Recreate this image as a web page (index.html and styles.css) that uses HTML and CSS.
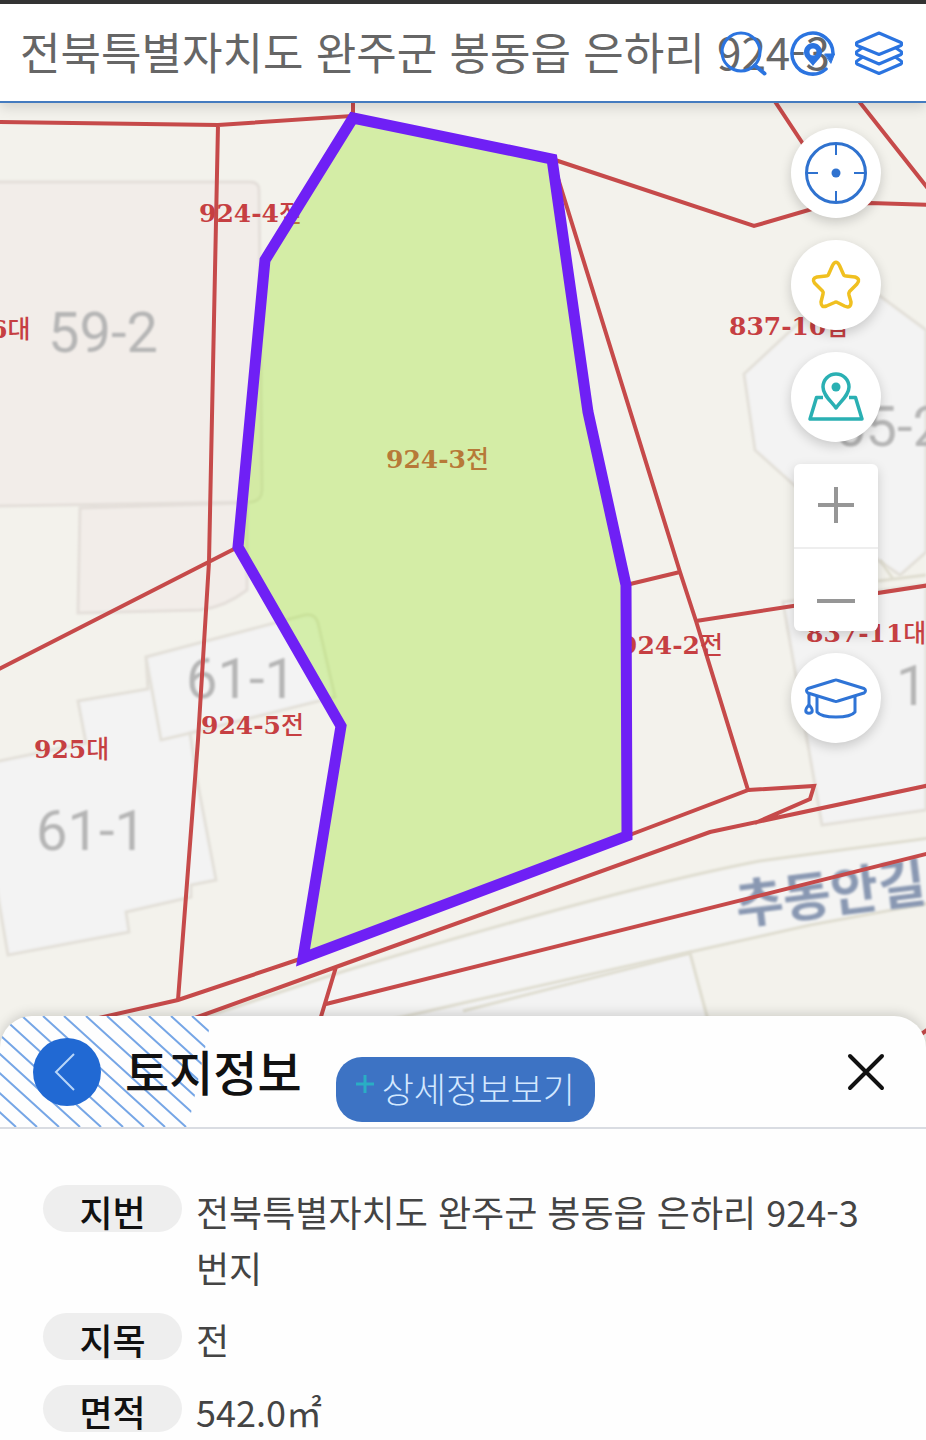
FILE: index.html
```html
<!DOCTYPE html>
<html lang="ko">
<head>
<meta charset="utf-8">
<meta name="viewport" content="width=device-width, initial-scale=1">
<title>토지정보</title>
<link rel="stylesheet" href="styles.css">
</head>
<body>
<div class="app">
  <header class="search-bar">
    <input class="search-input" type="text" aria-label="주소 검색" value="전북특별자치도 완주군 봉동읍 은하리 924-3">
    <div class="search-actions">
      <button class="icon-button" type="button" aria-label="검색">
        <svg viewBox="0 0 48 48" fill="none" stroke="#2b74e0" stroke-width="3" stroke-linecap="round"><circle cx="22" cy="23" r="19"/><path d="M36 36.500l9.500 8" stroke-width="4"/></svg>
      </button>
      <button class="icon-button" type="button" aria-label="위치 초기화">
        <svg viewBox="0 0 48 48" fill="none" stroke="#2b74e0" stroke-width="3.500" stroke-linecap="round"><path d="M39 40A20.500 20.500 0 1 1 46 25"/><path d="M38 25h9.500L44 34z" fill="#2b74e0" stroke-width="1" stroke-linejoin="round"/><path fill="#2b74e0" fill-rule="evenodd" stroke="none" d="M26 14c-5 0-9 4-9 9 0 6 5 8 9 14 4-6 9-8 9-14 0-5-4-9-9-9zm0 5.500a3.500 3.500 0 1 1 0 7 3.500 3.500 0 0 1 0-7z"/></svg>
      </button>
      <button class="icon-button" type="button" aria-label="레이어">
        <svg viewBox="0 0 48 48" fill="none" stroke="#2b74e0" stroke-width="3" stroke-linejoin="round" stroke-linecap="round"><path d="M24 4L46 13.500Q48 15 46 16.500L24 25.500 2 16.500Q0 15 2 13.500z"/><path d="M7 19l-5 3.500Q0 24 2 25.500L24 35 46 25.500Q48 24 46 22.500L41 19"/><path d="M7 28.500L2 32Q0 33.500 2 35L24 44.500 46 35Q48 33.500 46 32l-5-3.500"/></svg>
      </button>
    </div>
  </header>

  <main class="map">
    <svg class="map-canvas" viewBox="0 103 926 945" preserveAspectRatio="xMidYMin slice" role="img" aria-label="지적도">
      <defs>
        <filter id="soft" x="-10%" y="-10%" width="120%" height="120%"><feGaussianBlur stdDeviation="1.300"/></filter>
      </defs>
      <g class="building building-warm">
        <path d="M-10 182H250Q259 182 259 190L262 490Q262 500 252 502L-10 506z"/>
        <path d="M80 508L247 503V590Q225 607 200 610L78 613z"/>
      </g>
      <g class="building">
        <path d="M-10 763L86 743 78 701 148 689 146 657 305 615Q315 613 318 623L335 697 190 733 197 780 216 880 191 885V897L126 912 129 932 8 955 -10 850z"/>
        <path class="building-line" d="M146 657L161 740 195 732"/>
        <path d="M926 330L880 296Q850 280 815 308L744 374 755 450 794 485 878 560 900 575 926 552z"/>
        <path d="M783 602L926 585V810L822 825z"/>
        <path d="M-10 1050L690 953 706 1017V1060H-10z" stroke="none"/>
      </g>
      <path class="road" d="M0 1085L335 974Q620 888 760 861L930 838V903L810 925 690 952 463 1003 150 1075z"/>
      <path class="road-line" d="M463 1011L690 953 708 1020M878 581L926 575M880 560L893 579"/>

      <g class="house-no">
        <text x="48" y="352">59-2</text>
        <text x="186" y="698">61-1</text>
        <text x="36" y="850">61-1</text>
        <text x="834" y="446">65-2</text>
        <text x="896" y="705">1</text>
      </g>
      <text class="road-name" transform="translate(738 924) rotate(-7)">추동안길</text>

      <g class="lots">
        <path d="M-5 122L218 125 353 116V100M218 125L209 562 198 740 178 1000M-5 671L238 547"/>
        <path d="M552 159L754 226 812 209 870 203 930 205M774 100L815 162M858 100L930 191"/>
        <path d="M552 159L680 572 696 621 748 790 627 836M626 585L680 572M696 621L930 585"/>
        <path d="M748 790L814 786 810 799 755 823M930 785L710 832 336 967 195 1018M303 958L178 1000 90 1020M336 967L320 1020M326 1004L930 853M920 1035L930 1028"/>
      </g>

      <g class="lot-no">
        <text x="199" y="222">924-4<tspan class="lot-kind">전</tspan></text>
        <text x="-10" y="338">6<tspan class="lot-kind">대</tspan></text>
        <text x="386" y="468">924-3<tspan class="lot-kind">전</tspan></text>
        <text x="729" y="335">837-10<tspan class="lot-kind">답</tspan></text>
        <text x="620" y="654">924-2<tspan class="lot-kind">전</tspan></text>
        <text x="806" y="642">837-11<tspan class="lot-kind">대</tspan></text>
        <text x="201" y="734">924-5<tspan class="lot-kind">전</tspan></text>
        <text x="34" y="758">925<tspan class="lot-kind">대</tspan></text>
      </g>
      <path class="selected-lot" d="M353 118L552 159 588 412 626 585 627 836 303 958 341 726 238 547 265 260z"/>
    </svg>

    <div class="map-tools">
      <button class="round-button" type="button" aria-label="현재 위치">
        <svg viewBox="0 0 64 64" fill="none" stroke="#2f72cf" stroke-width="3"><circle cx="32" cy="32" r="29.500"/><path d="M32 3v11M32 50v11M3 32h11M50 32h11" stroke-width="2"/><circle cx="32" cy="32" r="4.500" fill="#2f72cf" stroke="none"/></svg>
      </button>
      <button class="round-button" type="button" aria-label="즐겨찾기">
        <svg viewBox="0 0 64 64" fill="none" stroke="#f0c020" stroke-width="3.500" stroke-linejoin="round"><path d="M28.500 12.500Q32 6 35.500 12.500L39.500 21.500Q40 23 42 23L51 24Q57 26 53 31L45.500 38.500Q44.500 40 45 42L47 49Q47 56 40.500 53L33.500 49.500Q32 48.700 30.500 49.500L22.500 53Q17 55 17 49L19 41Q19.500 39 18.500 38L10.500 30Q7.500 25.500 13 24L22 23Q24 23 24.500 21.500z"/></svg>
      </button>
      <button class="round-button" type="button" aria-label="지도 위치">
        <svg viewBox="0 0 64 64" fill="none" stroke="#2ab0b3" stroke-width="3.500" stroke-linejoin="round"><path d="M32 43C27 36 19 30 19 22a13 13 0 0 1 26 0C45 30 37 36 32 43z"/><circle cx="32" cy="22" r="4.500" fill="#2ab0b3" stroke="none"/><path d="M19 32.500H12.500L6 54H58L51.500 32.500H45"/></svg>
      </button>
      <div class="zoom">
        <button class="zoom-button" type="button" aria-label="확대"><svg viewBox="0 0 40 40" stroke="#969696" stroke-width="4"><path d="M20 1v36M2 19h36"/></svg></button>
        <button class="zoom-button zoom-out" type="button" aria-label="축소"><svg viewBox="0 0 40 40" stroke="#969696" stroke-width="4"><path d="M1 31h38"/></svg></button>
      </div>
      <button class="round-button" type="button" aria-label="도움말">
        <svg viewBox="0 0 64 64" fill="none" stroke="#2f74d6" stroke-width="3" stroke-linejoin="round"><path d="M30 14.500Q32 13.500 34 14.500L60 22.500Q63 24.500 60 27L34 35Q32 36 30 35L4 27Q1 24.500 4 22.500z"/><path d="M13 29.500V46Q17 51 32 51T51 46V29.500M5 27V40"/><path d="M5 39Q9 43 8 46Q5 48.500 2 46Q1 43 5 39z"/></svg>
      </button>
    </div>
  </main>

  <section class="sheet" aria-labelledby="sheet-title">
    <header class="sheet-header">
      <svg class="hatch" viewBox="0 0 212 111" fill="none" stroke="#76a6e6" stroke-width="2" aria-hidden="true">
        <defs><clipPath id="hatch-edge"><path d="M0 0H212L188 111H0z"/></clipPath></defs>
        <path clip-path="url(#hatch-edge)" d="M-106 0l122 111M-85 0l122 111M-63 0l122 111M-42 0l122 111M-21 0l122 111M1 0l122 111M22 0l122 111M43 0l122 111M64 0l122 111M86 0l122 111M107 0l122 111M128 0l122 111M149 0l122 111M171 0l122 111M192 0l122 111"/>
      </svg>
      <button class="back" type="button" aria-label="뒤로"><svg viewBox="0 0 40 40" fill="none" stroke="#b9d6f8" stroke-width="2"><path d="M27 2L9 20 27 38"/></svg></button>
      <h1 class="sheet-title" id="sheet-title">토지정보</h1>
      <button class="detail" type="button"><svg viewBox="0 0 18 18" stroke="#2aaec4" stroke-width="3" aria-hidden="true"><path d="M9 0v18M0 9h18"/></svg>상세정보보기</button>
      <button class="close" type="button" aria-label="닫기"><svg viewBox="0 0 40 40" stroke="#111" stroke-width="4" stroke-linecap="round"><path d="M4 4l32 32M36 4L4 36"/></svg></button>
    </header>
    <dl class="facts">
      <dt>지번</dt><dd>전북특별자치도 완주군 봉동읍 은하리 924-3 번지</dd>
      <dt>지목</dt><dd>전</dd>
      <dt>면적</dt><dd>542.0㎡</dd>
    </dl>
  </section>
</div>
</body>
</html>
```
FILE: styles.css
```css
* { box-sizing: border-box; }

body {
  margin: 0;
  background: #fefefe;
  color: #444;
  font-family: "Noto Sans CJK KR", sans-serif;
}

button {
  margin: 0;
  padding: 0;
  border: 0;
  background: none;
  font: inherit;
  cursor: pointer;
}

svg { display: block; }

.app {
  display: flex;
  flex-direction: column;
  min-height: 100vh;
}

/* Search bar */
.search-bar {
  position: relative;
  z-index: 1;
  display: flex;
  height: 103px;
  border-top: 4px solid #333;
  border-bottom: 2px solid #447bbf;
  background: #fff;
  box-shadow: 0 4px 12px rgba(0, 0, 0, 0.14);
}

.search-input {
  flex: 1;
  min-width: 0;
  padding: 0 20px 4px;
  border: 0;
  outline: 0;
  background: none;
  color: #666;
  font: 400 44px/64px "Noto Sans CJK KR", sans-serif;
}

.search-actions {
  position: absolute;
  top: 0;
  right: 23px;
  bottom: 0;
  display: flex;
  align-items: center;
  gap: 20px;
}

.icon-button svg {
  width: 48px;
  height: 48px;
}

/* Map */
.map {
  position: relative;
  flex: 1;
  min-height: 640px;
  overflow: hidden;
  background: #f3f2ec;
}

.map-canvas {
  position: absolute;
  inset: 0;
  width: 100%;
  height: 100%;
}

.building {
  fill: #f3f3f3;
  stroke: #e3e0d9;
  stroke-width: 3;
  filter: url(#soft);
}

.building-warm {
  fill: #f2ede9;
  stroke: #e4dfda;
}

.building-line { fill: none; }

.road {
  fill: #f4f4f3;
  stroke: #dfddd0;
  stroke-width: 3;
  filter: url(#soft);
}

.road-line {
  fill: none;
  stroke: #dfddd0;
  stroke-width: 3;
  filter: url(#soft);
}

.house-no {
  fill: #b5b5b5;
  font-family: Roboto, sans-serif;
  font-size: 56px;
  filter: url(#soft);
}

.road-name {
  fill: #8998b2;
  font-size: 52px;
  font-weight: 700;
  filter: url(#soft);
}

.lots {
  fill: none;
  stroke: #c64a4a;
  stroke-width: 4;
}

.lot-no {
  fill: #c63f42;
  font: 700 25px "DejaVu Serif", serif;
}

.lot-kind {
  font-family: "Noto Sans CJK KR", sans-serif;
  font-weight: 500;
}

.selected-lot {
  fill: #9ae424;
  fill-opacity: 0.35;
  stroke: #6f20f5;
  stroke-width: 11;
}

.map-tools {
  position: absolute;
  top: 25px;
  right: 45px;
  display: flex;
  flex-direction: column;
  align-items: center;
  gap: 22px;
}

.round-button {
  display: grid;
  place-items: center;
  width: 90px;
  height: 90px;
  border-radius: 50%;
  background: #fff;
  box-shadow: 0 4px 12px rgba(0, 0, 0, 0.18);
}

.round-button svg {
  width: 64px;
  height: 64px;
}

.zoom {
  width: 84px;
  border-radius: 6px;
  background: #fff;
  box-shadow: 0 4px 12px rgba(0, 0, 0, 0.16);
}

.zoom-button {
  display: grid;
  place-items: center;
  width: 100%;
  height: 83px;
}

.zoom-button svg {
  width: 40px;
  height: 40px;
}

.zoom-out {
  height: 84px;
  border-top: 2px solid #eee;
}

/* Land information sheet */
.sheet {
  position: relative;
  margin-top: -32px;
  border-radius: 32px 32px 0 0;
  background: #fefefe;
  box-shadow: 0 -2px 12px rgba(0, 0, 0, 0.16);
}

.sheet-header {
  position: relative;
  display: flex;
  align-items: center;
  height: 113px;
  padding: 0 40px 0 33px;
  overflow: hidden;
  border-bottom: 2px solid #d9dce2;
  border-radius: 32px 0 0 0;
}

.hatch {
  position: absolute;
  top: 0;
  left: 0;
  width: 212px;
  height: 111px;
}

.back {
  position: relative;
  display: grid;
  place-items: center;
  width: 68px;
  height: 68px;
  border-radius: 50%;
  background: #2169d3;
}

.back svg {
  width: 40px;
  height: 40px;
}

.sheet-title {
  position: relative;
  margin: 0 34px 4px 24px;
  color: #111;
  font-size: 48px;
  font-weight: 500;
  line-height: 64px;
}

.detail {
  display: flex;
  align-self: flex-end;
  align-items: center;
  gap: 8px;
  height: 65px;
  margin-bottom: 5px;
  padding: 0 20px 4px;
  border-radius: 26px;
  background: #3d73c4;
  color: #d3e8ff;
  font-size: 35px;
  font-weight: 300;
  line-height: 48px;
}

.detail svg {
  width: 18px;
  height: 18px;
  margin-bottom: 8px;
}

.close { margin-left: auto; }

.close svg {
  width: 40px;
  height: 40px;
}

.facts {
  display: grid;
  grid-template-columns: 139px 1fr;
  align-items: start;
  gap: 16px 14px;
  margin: 0;
  padding: 54px 43px 1px;
  font-size: 36px;
  line-height: 56px;
}

.facts dt {
  height: 47px;
  margin-top: 2px;
  border-radius: 24px;
  background: #eee;
  color: #111;
  font-weight: 500;
  line-height: 52px;
  text-align: center;
}

.facts dd { margin: 0; }
```
